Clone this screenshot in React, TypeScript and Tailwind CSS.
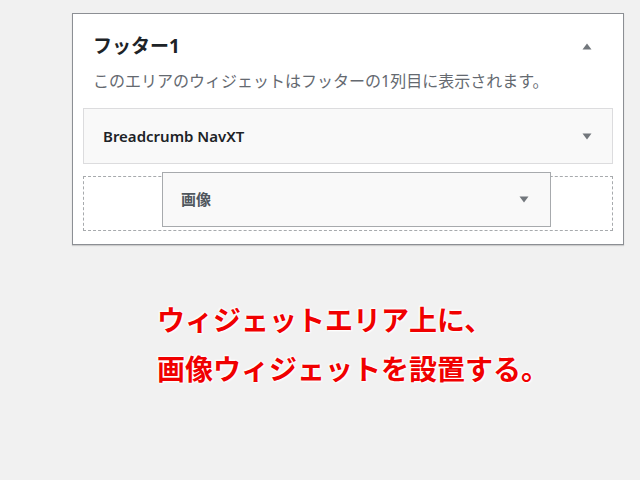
import React from 'react';

const JP = { fontFamily: '"Noto Sans", "Noto Sans CJK JP", sans-serif' };

function Arrow({ up = false, className = '' }: { up?: boolean; className?: string }) {
  return (
    <svg width="10" height="7" viewBox="0 0 10 7" className={className}>
      {up ? <path d="M5 0.5 L9.5 6.5 L0.5 6.5 Z" fill="#72777c" /> : <path d="M0.5 0.5 L9.5 0.5 L5 6.5 Z" fill="#72777c" />}
    </svg>
  );
}

export default function App() {
  return (
    <div className="min-h-[480px] w-[640px] bg-[#f1f1f1] pt-[13px]" style={JP}>
      <div className="ml-[72px] w-[552px] h-[232px] border border-[#8c8f94] bg-white shadow-[0_1px_1px_rgba(0,0,0,0.15)] px-[10px]">
        <div className="flex items-center justify-between pl-[10px] pr-[21px] pt-[18px]">
          <h2 className="text-[19px] leading-[28px] font-bold text-[#1d2327]">フッター1</h2>
          <Arrow up />
        </div>
        <p className="pl-[10px] mt-[9px] text-[16px] leading-[24px] text-[#646970]">このエリアのウィジェットはフッターの1列目に表示されます。</p>
        <div className="mt-[15px] h-[56px] border border-[#dcdcde] bg-[#f9f9f9] flex items-center justify-between pl-[19px] pr-[20px]">
          <span className="text-[15px] font-semibold text-[#1d2327]">Breadcrumb NavXT</span>
          <Arrow />
        </div>
        <div className="relative mt-[12px] h-[55px] border border-dashed border-[#a7aaad]">
          <div className="absolute left-[78px] top-[-5px] w-[389px] h-[55px] border border-[#a7aaad] bg-[#f9f9f9] flex items-center justify-between pl-[18px] pr-[21px]">
            <span className="text-[15px] font-semibold text-[#50575e]">画像</span>
            <Arrow />
          </div>
        </div>
      </div>
      <div
        className="ml-[157px] mt-[51px] text-[28px] leading-[49px] font-bold text-[#f00000]"
        style={{ textShadow: '0 0 2px #fff, 0 0 2px #fff, 0 0 3px #fff, 1px 1px 2px #fff, -1px -1px 2px #fff' }}
      >
        <p>ウィジェットエリア上に、</p>
        <p>画像ウィジェットを設置する。</p>
      </div>
    </div>
  );
}
